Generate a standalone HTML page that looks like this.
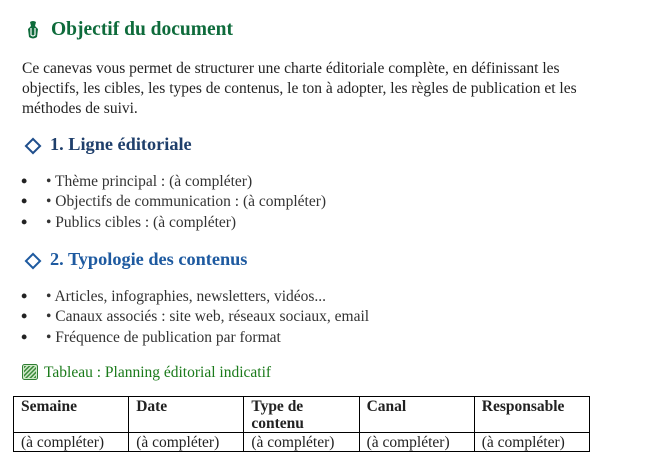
<!DOCTYPE html>
<html><head><meta charset="utf-8"><style>
body{margin:0;width:667px;height:445px;overflow:hidden;background:#fff;font-family:"Liberation Serif","DejaVu Serif",serif;color:#222;}
.a{position:absolute;white-space:nowrap;}
.p{font-size:15.5px;left:22px;}
.h1{font-size:19.5px;font-weight:bold;color:#0e6b3b;left:51px;top:19px;}
.h2{font-size:18.3px;font-weight:bold;left:50px;}
.b{font-size:15.5px;color:#333;}
.dot{left:21px;font-size:18px;font-weight:bold;line-height:18px;}
table{position:absolute;left:13px;top:396px;border-collapse:collapse;font-size:15.5px;table-layout:fixed;width:577px;}
td{border:1px solid #000;padding:1px 4px 0 7px;vertical-align:top;line-height:17px;white-space:nowrap;}
th{border:1px solid #000;padding:1px 4px 0 7px;vertical-align:top;text-align:left;line-height:17px;height:33px;}
</style></head><body>
<svg class="a" style="left:26px;top:20px" width="14" height="20" viewBox="0 0 14 20"><path d="M4 2 Q7 0 10 2 L9 6 L12 9 L11 17 Q7 20 3 17 L2 9 L5 6 Z" fill="#0e6b3b"/><path d="M5 8 L5 15 Q7 17 9 15 L9 8" stroke="#fff" stroke-width="1.2" fill="none"/></svg>
<div class="a h1">Objectif du document</div>
<div class="a p" style="top:60px">Ce canevas vous permet de structurer une charte éditoriale complète, en définissant les</div>
<div class="a p" style="top:80px">objectifs, les cibles, les types de contenus, le ton à adopter, les règles de publication et les</div>
<div class="a p" style="top:100px">méthodes de suivi.</div>
<svg class="a" style="left:23px;top:136px" width="20" height="20"><rect x="5" y="5" width="10" height="10" transform="rotate(45 10 10)" fill="none" stroke="#1f4e8c" stroke-width="2"/></svg>
<div class="a h2" style="top:134px;color:#1f3f6b">1. Ligne éditoriale</div>
<div class="a dot" style="top:172px">•</div><div class="a b" style="left:46px;top:173px">• Thème principal : (à compléter)</div>
<div class="a dot" style="top:192px">•</div><div class="a b" style="left:46px;top:193px">• Objectifs de communication : (à compléter)</div>
<div class="a dot" style="top:213px">•</div><div class="a b" style="left:46px;top:214px">• Publics cibles : (à compléter)</div>
<svg class="a" style="left:23px;top:251px" width="20" height="20"><rect x="5" y="5" width="10" height="10" transform="rotate(45 10 10)" fill="none" stroke="#1e5aa0" stroke-width="2"/></svg>
<div class="a h2" style="top:249px;color:#1e5aa0">2. Typologie des contenus</div>
<div class="a dot" style="top:287px">•</div><div class="a b" style="left:46px;top:288px">• Articles, infographies, newsletters, vidéos...</div>
<div class="a dot" style="top:307px">•</div><div class="a b" style="left:46px;top:308px">• Canaux associés : site web, réseaux sociaux, email</div>
<div class="a dot" style="top:328px">•</div><div class="a b" style="left:46px;top:329px">• Fréquence de publication par format</div>
<svg class="a" style="left:22px;top:364px" width="16" height="16"><defs><pattern id="h" width="3" height="3" patternUnits="userSpaceOnUse" patternTransform="rotate(45)"><rect width="1.5" height="3" fill="#3a8a3a"/></pattern></defs><rect x="0.5" y="0.5" width="15" height="15" rx="2" fill="#cfe8c8" stroke="#2e7d32"/><rect x="2" y="2" width="12" height="12" fill="url(#h)"/></svg>
<div class="a" style="left:44px;top:364px;font-size:15.5px;color:#1a7a1a">Tableau : Planning éditorial indicatif</div>
<table>
<tr><th>Semaine</th><th>Date</th><th>Type de<br>contenu</th><th>Canal</th><th>Responsable</th></tr>
<tr><td>(à compléter)</td><td>(à compléter)</td><td>(à compléter)</td><td>(à compléter)</td><td>(à compléter)</td></tr>
</table>
</body></html>
